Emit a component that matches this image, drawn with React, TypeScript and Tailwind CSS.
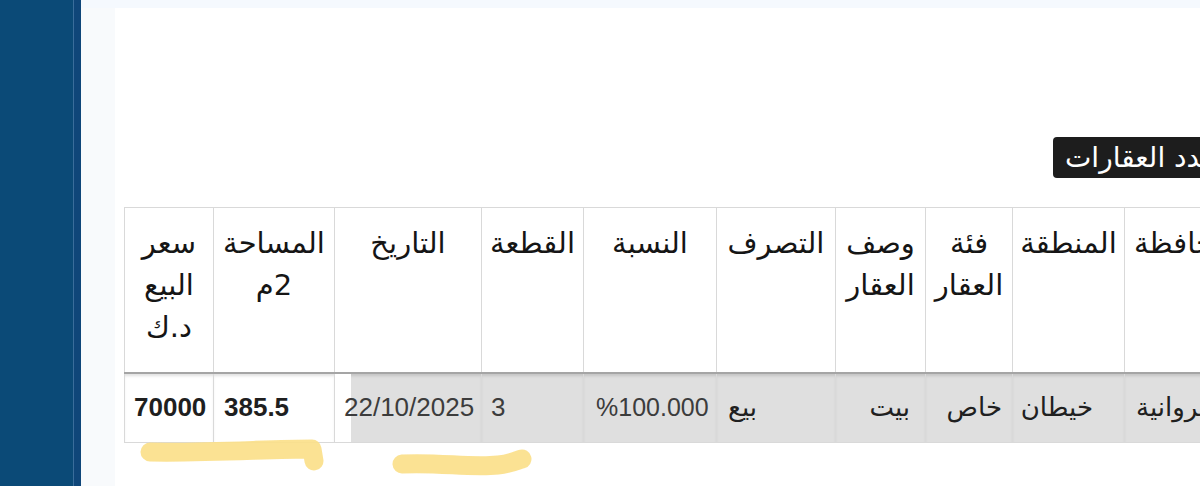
import React from 'react';

const arabic = { fontFamily: '"DejaVu Sans", "Noto Sans", sans-serif' };
const latin = { fontFamily: '"Liberation Sans", Arial, sans-serif' };

const headers = [
  { w: 'w-[89px]', lines: ['سعر', 'البيع', 'د.ك'] },
  { w: 'w-[121px]', lines: ['المساحة', 'm2'] },
  { w: 'w-[147px]', lines: ['التاريخ'] },
  { w: 'w-[102px]', lines: ['القطعة'] },
  { w: 'w-[133px]', lines: ['النسبة'] },
  { w: 'w-[119px]', lines: ['التصرف'] },
  { w: 'w-[90px]', lines: ['وصف', 'العقار'] },
  { w: 'w-[87px]', lines: ['فئة', 'العقار'] },
  { w: 'w-[112px]', lines: ['المنطقة'] },
  { w: 'w-[140px]', lines: ['المحافظة'] },
];

const cell = 'border border-[#d9d9d9] shadow-[inset_0_3px_3px_-1px_rgba(0,0,0,0.12)]';

const App = () => {
  return (
    <div className="relative flex h-[486px] w-[1200px] overflow-hidden bg-[#f5f9fe]">
      {/* sidebar */}
      <div className="flex h-full shrink-0">
        <div className="w-[73px] bg-[#0b4a77]" />
        <div className="w-px bg-[#3a6d9b]" />
        <div className="w-[7px] bg-[#0f4679]" />
      </div>

      {/* content */}
      <div className="flex flex-1 pt-[8px] bg-[#f5f9fe]">
        <div className="w-[34px] shrink-0 bg-[#f8fafc]" />
        <div className="relative flex-1 bg-white pl-[9px] pt-[199px]">
          {/* tooltip */}
          <div
            dir="rtl"
            className="absolute left-[938px] top-[129px] flex h-[41px] items-center whitespace-nowrap rounded-[4px] bg-[#1d1d1d] px-[12px] text-[28px] text-white"
            style={arabic}
          >
            عدد العقارات
          </div>

          <table className="w-max table-fixed border-collapse border border-[#d4d4d4]">
            <colgroup>
              {headers.map((h, i) => (
                <col key={i} className={h.w} />
              ))}
            </colgroup>
            <thead>
              <tr className="h-[165px]">
                {headers.map((h, i) => (
                  <th
                    key={i}
                    dir="rtl"
                    className={`align-top border border-[#d9d9d9] border-b-2 border-b-[#a5a5a5] pt-[14px] text-[29px] font-normal leading-[42px] text-[#151515] whitespace-nowrap ${
                      i === headers.length - 1 ? 'text-left pl-[9px]' : 'text-center px-0'
                    }`}
                    style={arabic}
                  >
                    {h.lines.map((l, j) =>
                      l === 'm2' ? (
                        <div key={j} dir="ltr" className="flex justify-center">
                          <span>م</span>
                          <span>2</span>
                        </div>
                      ) : (
                        <div key={j}>{l}</div>
                      )
                    )}
                  </th>
                ))}
              </tr>
            </thead>
            <tbody>
              <tr className="h-[70px] text-[26px]">
                <td className={`${cell} bg-white pl-[9px] font-bold text-[#1f1f1f]`} style={latin}>
                  70000
                </td>
                <td className={`${cell} bg-white pl-[10px] font-bold text-[#1f1f1f]`} style={latin}>
                  385.5
                </td>
                <td
                  className="border border-[#d9d9d9] bg-[#dfdfdf] pl-[9px] text-[#3c3c3c] shadow-[inset_16px_0_0_#fff,inset_0_3px_3px_-1px_rgba(0,0,0,0.12)]"
                  style={latin}
                >
                  22/10/2025
                </td>
                <td className={`${cell} bg-[#dfdfdf] pl-[9px] text-[#3c3c3c]`} style={latin}>
                  3
                </td>
                <td className={`${cell} bg-[#dfdfdf] pl-[12px] text-[#3c3c3c]`} style={latin}>
                  <span className="text-[25px]">%100.000</span>
                </td>
                <td dir="rtl" className={`${cell} bg-[#dfdfdf] pr-[78px] text-right text-[#202020]`} style={arabic}>
                  بيع
                </td>
                <td dir="rtl" className={`${cell} bg-[#dfdfdf] pr-[15px] text-right text-[#202020]`} style={arabic}>
                  بيت
                </td>
                <td dir="rtl" className={`${cell} bg-[#dfdfdf] pr-[10px] text-right text-[#202020]`} style={arabic}>
                  خاص
                </td>
                <td dir="rtl" className={`${cell} bg-[#dfdfdf] pr-[31px] text-right text-[#202020]`} style={arabic}>
                  خيطان
                </td>
                <td dir="rtl" className={`${cell} bg-[#dfdfdf] pl-[11px] text-left text-[#202020]`} style={arabic}>
                  الفروانية
                </td>
              </tr>
            </tbody>
          </table>
        </div>
      </div>

      {/* highlighter marks */}
      <svg className="pointer-events-none absolute inset-0" width="1200" height="486" viewBox="0 0 1200 486">
        <path d="M150 452 C 210 453, 270 449, 312 449 L 314 461" fill="none" stroke="#fbe08a" strokeWidth="19" strokeLinecap="round" strokeLinejoin="round" opacity="0.92" />
        <path d="M402 464 C 440 462, 470 468, 498 465 C 510 464, 518 460, 522 459" fill="none" stroke="#fbe08a" strokeWidth="19" strokeLinecap="round" strokeLinejoin="round" opacity="0.92" />
      </svg>
    </div>
  );
};

export default App;
